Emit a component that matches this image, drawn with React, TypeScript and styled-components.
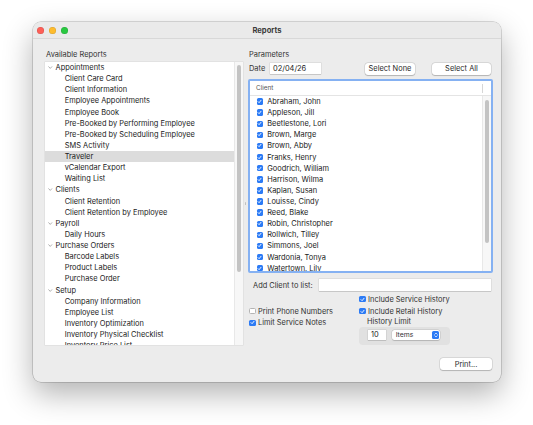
import React from 'react';
import styled, { createGlobalStyle } from 'styled-components';

const GlobalStyle = createGlobalStyle`
  html, body {
    margin: 0;
    padding: 0;
    background: #ffffff;
  }
  body {
    font-family: Inter, "Liberation Sans", sans-serif;
    color: #222;
    -webkit-font-smoothing: antialiased;
  }
`;

const Page = styled.div`
  width: 533px;
  height: 425px;
  padding: 22px 0 0 33px;
  box-sizing: border-box;
`;

const Window = styled.div`
  width: 468px;
  height: 360px;
  background: #ececec;
  border-radius: 8px;
  box-shadow: 0 12px 30px rgba(0, 0, 0, 0.3), 0 0 0 0.5px rgba(0, 0, 0, 0.28);
  display: flex;
  flex-direction: column;
  overflow: hidden;
`;

const TitleBar = styled.div`
  height: 16px;
  flex: none;
  display: flex;
  align-items: center;
  padding: 0 4px;
  border-bottom: 1px solid #d8d8d8;
  background: #eaeaea;
`;

const Lights = styled.div`
  display: flex;
  gap: 5px;
`;

const Light = styled.span<{ $color: string }>`
  width: 7px;
  height: 7px;
  border-radius: 50%;
  background: ${p => p.$color};
  box-shadow: inset 0 0 0 0.5px rgba(0, 0, 0, 0.15);
`;

const Title = styled.div`
  flex: 1;
  text-align: center;
  font-size: 7.6px;
  font-weight: 700;
  color: #3a3a3a;
  margin-right: 31px;
`;

const Body = styled.div`
  display: flex;
  padding: 11px 8px 0 12px;
`;

const Column = styled.div<{ $width: number }>`
  width: ${p => p.$width}px;
  display: flex;
  flex-direction: column;
`;

const SectionLabel = styled.div`
  height: 12px;
  line-height: 10px;
  font-size: 7.45px;
  color: #333;
  padding-left: 1px;
`;

const TreeBox = styled.div`
  height: 283px;
  display: flex;
  background: #fff;
  box-shadow: 0 0 0 0.5px rgba(0, 0, 0, 0.08);
`;

const TreeRows = styled.div`
  flex: 1;
  overflow: hidden;
`;

const TreeRow = styled.div<{ $level: number; $selected?: boolean }>`
  height: 11.14px;
  display: flex;
  align-items: center;
  gap: 3px;
  padding-left: ${p => (p.$level === 0 ? 3 : 19.7)}px;
  font-size: 7.45px;
  white-space: nowrap;
  background: ${p => (p.$selected ? '#dcdcdc' : 'transparent')};
`;

const Chevron = styled.svg`
  width: 4.5px;
  height: 3px;
  flex: none;
`;

const ScrollTrack = styled.div<{ $width: number }>`
  width: ${p => p.$width}px;
  flex: none;
  background: #f7f7f7;
  border-left: 0.5px solid #e8e8e8;
  display: flex;
  justify-content: center;
`;

const ScrollThumb = styled.div<{ $top: number; $height: number; $width: number }>`
  width: ${p => p.$width}px;
  height: ${p => p.$height}px;
  margin-top: ${p => p.$top}px;
  border-radius: 3px;
  background: #c3c3c3;
`;

const Splitter = styled.div`
  width: 5px;
  display: flex;
  align-items: center;
  justify-content: center;
  padding-top: 12px;
`;

const SplitDot = styled.span`
  width: 1.5px;
  height: 3px;
  border-radius: 1px;
  background: #c0c0c0;
`;

const DateRow = styled.div`
  height: 13px;
  display: flex;
  align-items: center;
  padding-left: 1px;
  padding-right: 2px;
  font-size: 7.45px;
`;

const DateLabel = styled.span`
  width: 21px;
  color: #333;
`;

const Field = styled.div<{ $width?: number; $height?: number }>`
  ${p => (p.$width ? `width: ${p.$width}px;` : 'flex: 1;')}
  height: ${p => p.$height ?? 11}px;
  background: #fff;
  box-shadow: 0 0 0 0.5px rgba(0, 0, 0, 0.12), 0 0.5px 0.5px rgba(0, 0, 0, 0.1);
  font-size: 7.45px;
  display: flex;
  align-items: center;
  padding-left: 3px;
  box-sizing: border-box;
`;

const Buttons = styled.div`
  margin-left: auto;
  display: flex;
  gap: 17px;
`;

const Button = styled.div<{ $width: number }>`
  width: ${p => p.$width}px;
  height: 12px;
  background: #fff;
  border-radius: 3px;
  box-shadow: 0 0 0 0.5px rgba(0, 0, 0, 0.14), 0 0.5px 1px rgba(0, 0, 0, 0.18);
  font-size: 7.45px;
  color: #2a2a2a;
  display: flex;
  align-items: center;
  justify-content: center;
`;

const ClientBox = styled.div`
  margin-top: 4px;
  height: 194px;
  border: 2px solid #85b1f2;
  border-radius: 2px;
  background: #fff;
  box-sizing: border-box;
  display: flex;
  flex-direction: column;
`;

const ClientHeader = styled.div`
  height: 14px;
  flex: none;
  display: flex;
  align-items: center;
  padding-left: 6px;
  font-size: 6.4px;
  color: #555;
  border-bottom: 1px solid #e4e4e4;
`;

const HeaderCell = styled.span`
  flex: 1;
`;

const HeaderDivider = styled.span`
  width: 0.5px;
  height: 9px;
  background: #d6d6d6;
  margin-right: 9px;
`;

const ClientArea = styled.div`
  flex: 1;
  display: flex;
  overflow: hidden;
`;

const ClientRows = styled.div`
  flex: 1;
  overflow: hidden;
`;

const ClientRow = styled.div`
  height: 11.12px;
  display: flex;
  align-items: center;
  gap: 4px;
  padding-left: 6.7px;
  font-size: 7.45px;
  white-space: nowrap;
`;

const BoxBase = styled.span<{ $checked: boolean }>`
  width: 6.5px;
  height: 6.5px;
  flex: none;
  border-radius: 1.5px;
  box-sizing: border-box;
  display: flex;
  align-items: center;
  justify-content: center;
  background: ${p => (p.$checked ? '#2c7bf5' : '#fff')};
  border: ${p => (p.$checked ? 'none' : '0.5px solid #b4b4b4')};
`;

const AddRow = styled.div`
  margin-top: 6px;
  height: 12px;
  display: flex;
  align-items: center;
  gap: 6px;
  padding-left: 5px;
  padding-right: 2px;
  font-size: 7.45px;
  color: #333;
`;

const Options = styled.div`
  margin-top: 2px;
  display: flex;
  padding-left: 1px;
`;

const OptionColumn = styled.div<{ $width?: number; $offset?: number }>`
  ${p => (p.$width ? `width: ${p.$width}px;` : 'flex: 1;')}
  padding-top: ${p => p.$offset ?? 0}px;
  display: flex;
  flex-direction: column;
`;

const CheckRow = styled.div<{ $height: number }>`
  height: ${p => p.$height}px;
  display: flex;
  align-items: center;
  gap: 2.5px;
  font-size: 7.45px;
  color: #333;
  white-space: nowrap;
`;

const SubLabel = styled.div`
  height: 9px;
  line-height: 9px;
  padding-left: 8px;
  font-size: 7.45px;
  color: #333;
`;

const LimitBox = styled.div`
  width: 91px;
  height: 18px;
  margin-top: 0.5px;
  border-radius: 4px;
  background: #e1e1e1;
  display: flex;
  align-items: flex-start;
  gap: 5.7px;
  padding: 3px 0 0 9px;
  box-sizing: border-box;
`;

const Select = styled.div`
  width: 48.5px;
  height: 10px;
  background: #fff;
  border-radius: 2.5px;
  box-shadow: 0 0 0 0.5px rgba(0, 0, 0, 0.12), 0 0.5px 1px rgba(0, 0, 0, 0.15);
  display: flex;
  align-items: center;
  justify-content: space-between;
  padding: 0 1px 0 4px;
  box-sizing: border-box;
  font-size: 6.8px;
  color: #333;
`;

const Stepper = styled.span`
  width: 7px;
  height: 8px;
  border-radius: 1.5px;
  background: #2c7bf5;
  display: flex;
  align-items: center;
  justify-content: center;
`;

const Footer = styled.div`
  margin-top: auto;
  display: flex;
  justify-content: flex-end;
  padding: 0 9px 12px 0;
`;

const CheckBox: React.FC<{ checked: boolean }> = ({ checked }) => (
  <BoxBase $checked={checked}>
    {checked && (
      <svg width="5" height="5" viewBox="0 0 10 10">
        <path d="M2 5.2 L4.2 7.4 L8 2.6" fill="none" stroke="#fff" strokeWidth="1.8" strokeLinecap="round" strokeLinejoin="round" />
      </svg>
    )}
  </BoxBase>
);

type TreeItem = { label: string; level: number; selected?: boolean };

const reports: TreeItem[] = [
  { label: 'Appointments', level: 0 },
  { label: 'Client Care Card', level: 1 },
  { label: 'Client Information', level: 1 },
  { label: 'Employee Appointments', level: 1 },
  { label: 'Employee Book', level: 1 },
  { label: 'Pre-Booked by Performing Employee', level: 1 },
  { label: 'Pre-Booked by Scheduling Employee', level: 1 },
  { label: 'SMS Activity', level: 1 },
  { label: 'Traveler', level: 1, selected: true },
  { label: 'vCalendar Export', level: 1 },
  { label: 'Waiting List', level: 1 },
  { label: 'Clients', level: 0 },
  { label: 'Client Retention', level: 1 },
  { label: 'Client Retention by Employee', level: 1 },
  { label: 'Payroll', level: 0 },
  { label: 'Daily Hours', level: 1 },
  { label: 'Purchase Orders', level: 0 },
  { label: 'Barcode Labels', level: 1 },
  { label: 'Product Labels', level: 1 },
  { label: 'Purchase Order', level: 1 },
  { label: 'Setup', level: 0 },
  { label: 'Company Information', level: 1 },
  { label: 'Employee List', level: 1 },
  { label: 'Inventory Optimization', level: 1 },
  { label: 'Inventory Physical Checklist', level: 1 },
  { label: 'Inventory Price List', level: 1 },
];

const clients = [
  'Abraham, John',
  'Appleson, Jill',
  'Beetlestone, Lori',
  'Brown, Marge',
  'Brown, Abby',
  'Franks, Henry',
  'Goodrich, William',
  'Harrison, Wilma',
  'Kaplan, Susan',
  'Louisse, Cindy',
  'Reed, Blake',
  'Robin, Christopher',
  'Rollwich, Tilley',
  'Simmons, Joel',
  'Wardonia, Tonya',
  'Watertown, Lily',
];

export default function App() {
  return (
    <Page>
      <GlobalStyle />
      <Window>
        <TitleBar>
          <Lights>
            <Light $color="#fe5f57" />
            <Light $color="#febc2e" />
            <Light $color="#28c840" />
          </Lights>
          <Title>Reports</Title>
        </TitleBar>

        <Body>
          <Column $width={198}>
            <SectionLabel>Available Reports</SectionLabel>
            <TreeBox>
              <TreeRows>
                {reports.map(r => (
                  <TreeRow key={r.label} $level={r.level} $selected={r.selected}>
                    {r.level === 0 && (
                      <Chevron viewBox="0 0 6 4">
                        <path d="M0.6 0.6 L3 3.2 L5.4 0.6" fill="none" stroke="#7a7a7a" strokeWidth="0.8" />
                      </Chevron>
                    )}
                    {r.label}
                  </TreeRow>
                ))}
              </TreeRows>
              <ScrollTrack $width={8}>
                <ScrollThumb $top={3} $height={207} $width={4.5} />
              </ScrollTrack>
            </TreeBox>
          </Column>

          <Splitter>
            <SplitDot />
          </Splitter>

          <Column $width={245}>
            <SectionLabel>Parameters</SectionLabel>
            <DateRow>
              <DateLabel>Date</DateLabel>
              <Field $width={51}>02/04/26</Field>
              <Buttons>
                <Button $width={50}>Select None</Button>
                <Button $width={59}>Select All</Button>
              </Buttons>
            </DateRow>

            <ClientBox>
              <ClientHeader>
                <HeaderCell>Client</HeaderCell>
                <HeaderDivider />
              </ClientHeader>
              <ClientArea>
                <ClientRows>
                  {clients.map(c => (
                    <ClientRow key={c}>
                      <CheckBox checked />
                      {c}
                    </ClientRow>
                  ))}
                </ClientRows>
                <ScrollTrack $width={8}>
                  <ScrollThumb $top={4} $height={143} $width={4} />
                </ScrollTrack>
              </ClientArea>
            </ClientBox>

            <AddRow>
              Add Client to list:
              <Field $height={12} />
            </AddRow>

            <Options>
              <OptionColumn $width={110} $offset={12}>
                <CheckRow $height={12}>
                  <CheckBox checked={false} />
                  Print Phone Numbers
                </CheckRow>
                <CheckRow $height={11.5}>
                  <CheckBox checked />
                  Limit Service Notes
                </CheckRow>
              </OptionColumn>
              <OptionColumn>
                <CheckRow $height={12}>
                  <CheckBox checked />
                  Include Service History
                </CheckRow>
                <CheckRow $height={12}>
                  <CheckBox checked />
                  Include Retail History
                </CheckRow>
                <SubLabel>History Limit</SubLabel>
                <LimitBox>
                  <Field $width={18} $height={10}>10</Field>
                  <Select>
                    Items
                    <Stepper>
                      <svg width="4" height="6" viewBox="0 0 8 12">
                        <path d="M1.5 4.5 L4 2 L6.5 4.5 M1.5 7.5 L4 10 L6.5 7.5" fill="none" stroke="#fff" strokeWidth="1.4" strokeLinecap="round" strokeLinejoin="round" />
                      </svg>
                    </Stepper>
                  </Select>
                </LimitBox>
              </OptionColumn>
            </Options>
          </Column>
        </Body>

        <Footer>
          <Button $width={52}>Print...</Button>
        </Footer>
      </Window>
    </Page>
  );
}
